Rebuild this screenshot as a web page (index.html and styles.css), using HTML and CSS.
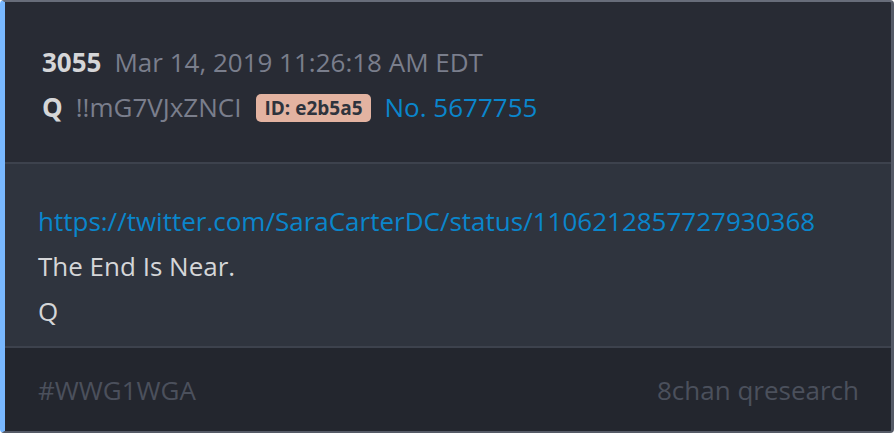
FILE: index.html
```html
<!DOCTYPE html>
<html>
<head>
<meta charset="utf-8">
<link rel="stylesheet" href="styles.css">
</head>
<body>
<div class="card">
  <div class="head">
    <div class="row"><span class="num">3055</span><span class="date">Mar 14, 2019 11:26:18 AM EDT</span></div>
    <div class="row"><span class="name">Q</span><span class="trip">!!mG7VJxZNCI</span><span class="badge">ID: e2b5a5</span><a class="no">No. 5677755</a></div>
  </div>
  <div class="body">
    <div class="line"><a class="link">https://twitter.com/SaraCarterDC/status/1106212857727930368</a></div>
    <div class="line">The End Is Near.</div>
    <div class="line">Q</div>
  </div>
  <div class="foot">
    <span>#WWG1WGA</span>
    <span>8chan qresearch</span>
  </div>
</div>
</body>
</html>
```
FILE: styles.css
```css
html, body { margin: 0; padding: 0; background: #ffffff; }
body { font-family: "Open Sans", "Noto Sans", sans-serif; }
.card {
  width: 886px;
  height: 429px;
  background: #282b34;
  border-top: 2px solid #686d7a;
  border-right: 3px solid #555a66;
  border-bottom: 2px solid #555a66;
  border-left: 5px solid #79b8ff;
  border-radius: 4px;
  display: flex;
  flex-direction: column;
  overflow: hidden;
}
.head {
  padding: 38px 0 0 37px;
  height: 122px;
  border-bottom: 2px solid #3d424d;
}
.row { display: flex; align-items: baseline; line-height: 45px; font-size: 26px; }
.num { font-weight: 700; color: #d5d6d8; margin-right: 13px; }
.date { color: #7a7e8c; }
.name { font-weight: 700; color: #d5d6d8; margin-right: 13px; }
.trip { color: #7a7e8c; margin-right: 15px; }
.badge {
  align-self: center;
  background: #e3b3a1;
  color: #2e333d;
  font-size: 19px;
  font-weight: 700;
  line-height: 28px;
  padding: 0 8px;
  border-radius: 5px;
  margin-right: 14px;
}
.no { color: #0a86cc; }
.body {
  background: #2f343e;
  padding: 35px 0 0 33px;
  height: 147px;
  border-bottom: 2px solid #3d424d;
}
.line { font-size: 26px; line-height: 45px; color: #d5d6d8; }
.link { color: #0a86cc; }
.foot {
  flex: 1;
  background: #23262e;
  display: flex;
  justify-content: space-between;
  padding: 0 32px 0 33px;
  align-items: center;
  font-size: 26px;
  color: #4b505c;
}
```
